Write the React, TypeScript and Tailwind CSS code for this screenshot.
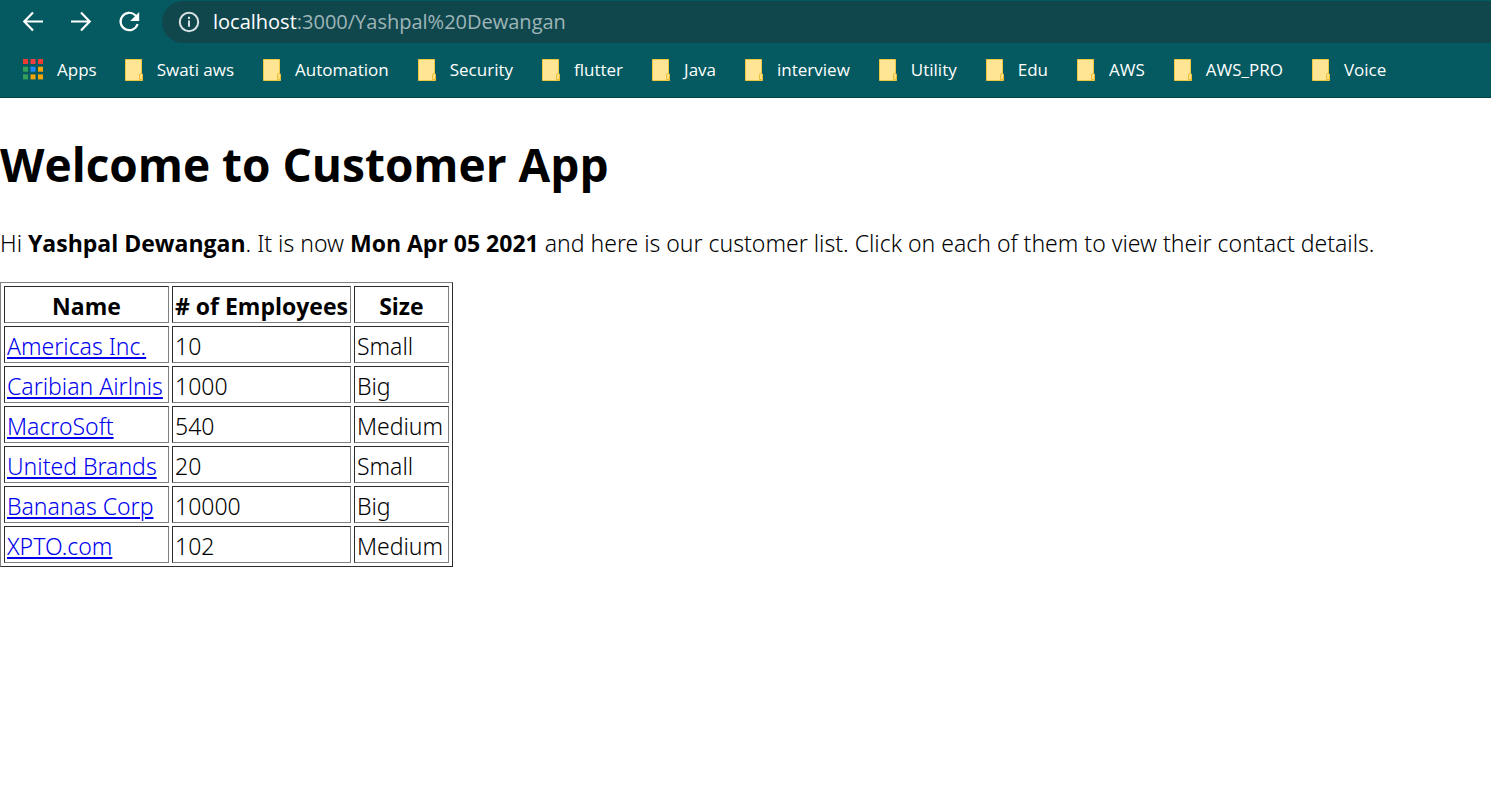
import type { ReactNode } from "react";

const bookmarks = [
  "Swati aws",
  "Automation",
  "Security",
  "flutter",
  "Java",
  "interview",
  "Utility",
  "Edu",
  "AWS",
  "AWS_PRO",
  "Voice",
];

const customers = [
  { name: "Americas Inc.", employees: 10, size: "Small" },
  { name: "Caribian Airlnis", employees: 1000, size: "Big" },
  { name: "MacroSoft", employees: 540, size: "Medium" },
  { name: "United Brands", employees: 20, size: "Small" },
  { name: "Bananas Corp", employees: 10000, size: "Big" },
  { name: "XPTO.com", employees: 102, size: "Medium" },
];

const appColours = [
  "#ee3b34", "#f04040", "#ee3b34",
  "#34a058", "#2088f0", "#f4a50b",
  "#34a058", "#f4a50b", "#f4a50b",
];

function NavButton({ label, children }: { label: string; children: ReactNode }) {
  return (
    <button type="button" aria-label={label} className="flex size-6 items-center justify-center text-white">
      {children}
    </button>
  );
}

function AppsIcon() {
  return (
    <svg width="20" height="21" viewBox="0 0 20 21" aria-hidden="true">
      {appColours.map((colour, i) => (
        <rect key={i} x={(i % 3) * 7.5} y={Math.floor(i / 3) * 7.7} width="5" height="5" fill={colour} />
      ))}
    </svg>
  );
}

function FolderIcon() {
  return (
    <svg width="19" height="22" viewBox="0 0 19 22" aria-hidden="true">
      <path d="M.5.5h16v14l1 .8v6.200H.5z" fill="#ffe594" stroke="#efc743" />
      <path d="M14.500 20.500v-5q0-1 1-1h1l1 .8v5.200z" fill="#ffe07c" stroke="#e9bd38" />
    </svg>
  );
}

function BrowserBar() {
  return (
    <header className="border-b border-[#034347] bg-[#045a60]">
      <div className="flex h-11 items-center pl-[21px]">
        <nav aria-label="History" className="flex gap-6">
          <NavButton label="Back">
            <svg width="24" height="24" viewBox="0 0 24 24" fill="none" stroke="currentColor" strokeWidth="2.200" aria-hidden="true">
              <path d="M22 11.500H4M12 2.600 3.300 11.500l8.700 8.900" />
            </svg>
          </NavButton>
          <NavButton label="Forward">
            <svg width="24" height="24" viewBox="0 0 24 24" fill="none" stroke="currentColor" strokeWidth="2.200" aria-hidden="true">
              <path d="M2 11.500h18M12 2.600l8.700 8.900-8.700 8.900" />
            </svg>
          </NavButton>
          <NavButton label="Reload">
            <svg width="24" height="24" viewBox="0 0 24 24" aria-hidden="true">
              <path d="M20.600 14A8.700 8.700 0 1 1 18.300 5.200L19.600 6.500" fill="none" stroke="currentColor" strokeWidth="2.200" />
              <path d="M22.200 2v9h-9z" fill="currentColor" />
            </svg>
          </NavButton>
        </nav>
        <div className="ml-[21px] flex h-[42px] flex-1 items-center gap-[13px] rounded-l-full bg-[#10474d] pl-4">
          <svg width="22" height="22" viewBox="0 0 22 22" aria-hidden="true">
            <circle cx="11" cy="11" r="9.200" fill="none" stroke="#d9e3e4" strokeWidth="2" />
            <path d="M11 9.500v6.300M11 5.800v2.200" stroke="#d9e3e4" strokeWidth="2" />
          </svg>
          <p className="text-xl text-[#9fb5b8]">
            <span className="text-white">localhost</span>:3000/Yashpal%20Dewangan
          </p>
        </div>
      </div>
      <nav aria-label="Bookmarks" className="flex h-[53px] items-center gap-7 pb-0.5 pl-[23px] text-[17px] text-white">
        <a href="#apps" className="flex items-center gap-3.5">
          <AppsIcon />
          Apps
        </a>
        {bookmarks.map((label) => (
          <a key={label} href="#folder" className="flex items-center gap-[13px]">
            <FolderIcon />
            <span className="pr-px">{label}</span>
          </a>
        ))}
      </nav>
    </header>
  );
}

export default function App() {
  return (
    <div className="min-h-screen bg-white font-['Open_Sans',sans-serif] text-black">
      <BrowserBar />
      <main className="pt-[34px]">
        <h1 className="text-[46px] leading-16 font-bold">Welcome to Customer App</h1>
        <p className="mt-[29px] font-['Noto_Sans',sans-serif] text-[23px] leading-9 font-[350]">
          Hi <b className="font-['Open_Sans',sans-serif] font-bold">Yashpal Dewangan</b>. It is now{" "}
          <b className="font-['Open_Sans',sans-serif] font-bold">Mon Apr 05 2021</b> and here is our customer list.
          Click on each of them to view their contact details.
        </p>
        <table className="mt-[21px] border-separate border-spacing-[3px] border border-t-[#808080] border-r-[#2c2c2c] border-b-[#2c2c2c] border-l-[#808080] text-[23px] leading-[31px]">
          <colgroup>
            <col className="w-[165px]" />
            <col className="w-[178px]" />
            <col className="w-[95px]" />
          </colgroup>
          <thead>
            <tr>
              {["Name", "# of Employees", "Size"].map((heading) => (
                <th
                  key={heading}
                  scope="col"
                  className="border border-t-[#2c2c2c] border-r-[#808080] border-b-[#808080] border-l-[#2c2c2c] px-0.5 pt-1 text-center font-bold whitespace-nowrap"
                >
                  {heading}
                </th>
              ))}
            </tr>
          </thead>
          <tbody className="font-['Noto_Sans',sans-serif] font-[350]">
            {customers.map((c) => (
              <tr key={c.name}>
                {[c.name, c.employees, c.size].map((value, i) => (
                  <td
                    key={i}
                    className="border border-t-[#2c2c2c] border-r-[#808080] border-b-[#808080] border-l-[#2c2c2c] px-0.5 pt-1 whitespace-nowrap"
                  >
                    {i === 0 ? (
                      <a href="#customer" className="text-[#0000ee] underline decoration-2 underline-offset-2">
                        {value}
                      </a>
                    ) : (
                      value
                    )}
                  </td>
                ))}
              </tr>
            ))}
          </tbody>
        </table>
      </main>
    </div>
  );
}
